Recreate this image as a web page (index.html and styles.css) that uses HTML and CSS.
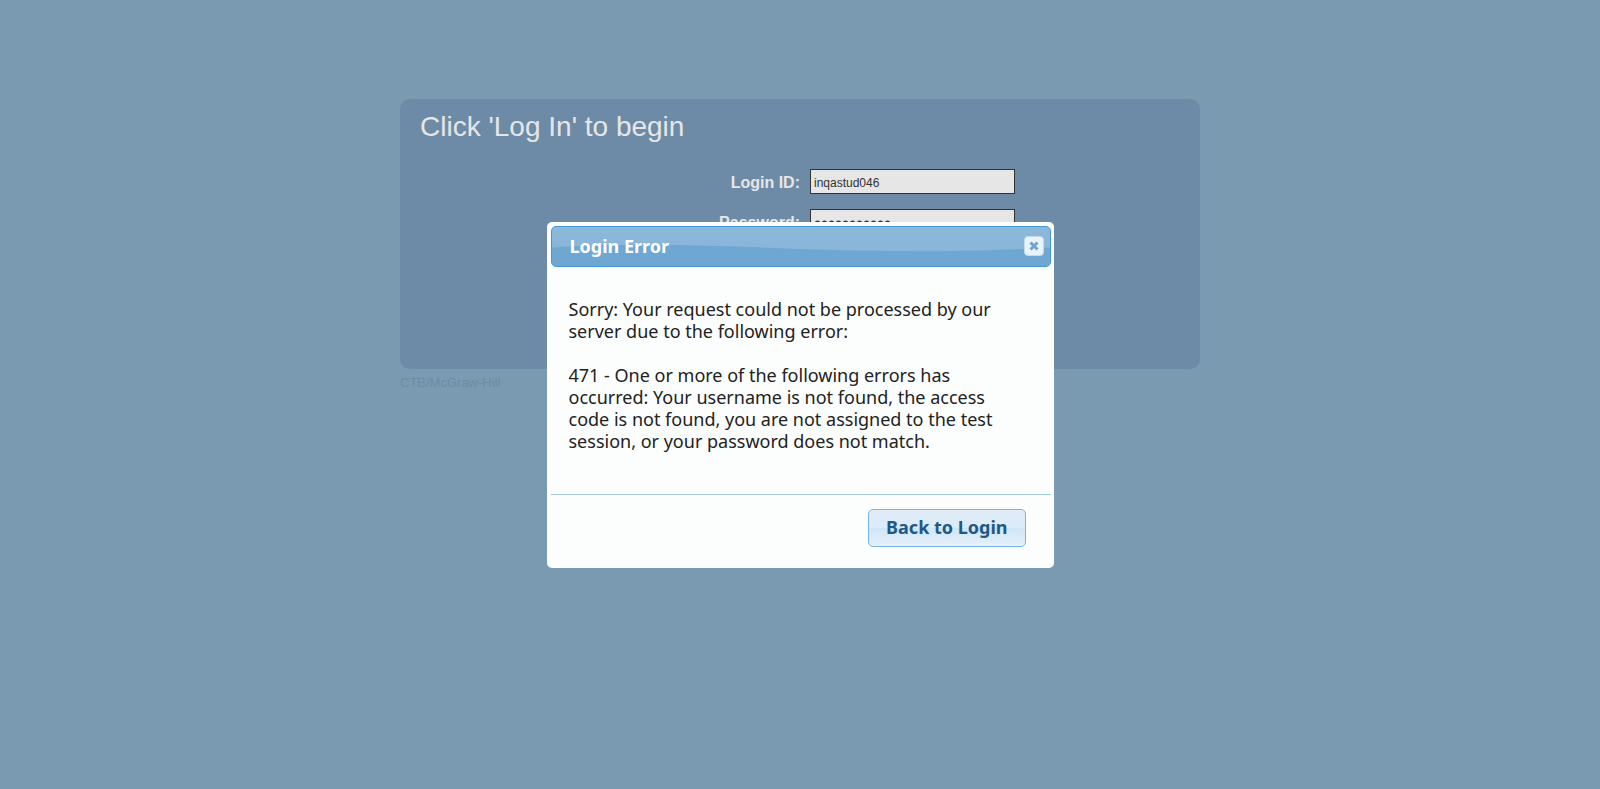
FILE: index.html
```html
<!DOCTYPE html>
<html lang="en">
<head>
<meta charset="utf-8">
<title>Log In</title>
<link rel="stylesheet" href="styles.css">
</head>
<body>
<main class="page">
  <section class="login-panel">
    <h1 class="login-title">Click 'Log In' to begin</h1>
    <form class="login-form">
      <label for="login-id">Login ID:</label>
      <input id="login-id" type="text" value="inqastud046">
      <label for="password">Password:</label>
      <input id="password" type="password" value="password123">
    </form>
  </section>
  <footer class="copyright">CTB/McGraw-Hill</footer>
</main>
<div class="overlay">
  <div class="dialog" role="dialog" aria-modal="true" aria-labelledby="dialog-title">
    <header class="dialog-header">
      <svg class="dialog-wave" viewBox="0 0 500 40" preserveAspectRatio="none" aria-hidden="true">
        <path d="M0 21C85 16 150 19 235 22S400 27 500 21V40H0Z"/>
      </svg>
      <h2 class="dialog-title" id="dialog-title">Login Error</h2>
      <button class="close-button" type="button" aria-label="Close">
        <svg width="12" height="12" viewBox="0 0 12 12" aria-hidden="true"><path d="M2.500 2.500L9.500 9.500M9.500 2.500L2.500 9.500"/></svg>
      </button>
    </header>
    <div class="dialog-body">
      <p>Sorry: Your request could not be processed by our<br>server due to the following error:</p>
      <p>471 - One or more of the following errors has<br>occurred: Your username is not found, the access<br>code is not found, you are not assigned to the test<br>session, or your password does not match.</p>
    </div>
    <footer class="dialog-footer">
      <button class="back-button" type="button">Back to Login</button>
    </footer>
  </div>
</div>
</body>
</html>
```
FILE: styles.css
```css
* { box-sizing: border-box; }

body {
  margin: 0;
  min-height: 100vh;
  background: #799ab1;
  font-family: "Liberation Sans", Arial, sans-serif;
}

.page {
  max-width: 800px;
  margin: 0 auto;
  padding-top: 99px;
}

.login-panel {
  min-height: 270px;
  padding: 12px 20px;
  border-radius: 10px;
  background: #6d8ba7;
  color: #e6e6e6;
}

.login-title {
  margin: 0 0 26px;
  font-size: 28px;
  line-height: 32px;
  font-weight: 400;
}

.login-form {
  display: grid;
  grid-template-columns: 1fr 1fr;
  gap: 15px 10px;
  align-items: center;
}

.login-form label {
  padding-top: 2px;
  margin-right: -5px;
  font-size: 16px;
  line-height: 23px;
  font-weight: 700;
  text-align: right;
}

.login-form input {
  width: 205px;
  height: 25px;
  margin: 0 5px;
  padding: 2px 3px 0;
  border: 1px solid #333;
  background: #e6e6e6;
  color: #333;
  font: 12px "Liberation Sans", Arial, sans-serif;
}

.login-form input[type="password"] {
  padding-top: 4px;
  font-size: 20px;
  line-height: 20px;
}

.copyright {
  padding-top: 5px;
  color: #6d8ba7;
  font-size: 13px;
  line-height: 18px;
}

.overlay {
  position: fixed;
  inset: 0;
  display: flex;
  align-items: center;
  justify-content: center;
}

.dialog {
  width: 507px;
  padding: 4px 3px 4px 4px;
  border-radius: 5px;
  background: #fcfdfd;
  color: #222;
  font-family: "Lucida Grande", "Lucida Sans", "Noto Sans", sans-serif;
  font-size: 18px;
}

.dialog-header {
  position: relative;
  display: flex;
  align-items: center;
  justify-content: space-between;
  height: 41px;
  padding: 0 6px 0 18px;
  border: 1px solid #4297d7;
  border-radius: 5px;
  overflow: hidden;
  background: linear-gradient(#8cb8da, #87b3d8);
}

.dialog-wave {
  position: absolute;
  inset: 0;
  width: 100%;
  height: 100%;
  fill: #6fa7d3;
}

.dialog-title {
  position: relative;
  margin: 0;
  color: #fff;
  font-size: 18px;
  line-height: 22px;
  font-weight: 700;
}

.close-button {
  position: relative;
  display: grid;
  place-items: center;
  width: 20px;
  height: 20px;
  padding: 0;
  border: 1px solid #c5dbec;
  border-radius: 4px;
  background: #e9f3fb;
}

.close-button path {
  fill: none;
  stroke: #6ca5d3;
  stroke-width: 3;
}

.dialog-body {
  padding: 31px 18px 32px;
  line-height: 22px;
}

.dialog-body p {
  margin: 0 0 22px;
  white-space: nowrap;
}

.dialog-body p:last-child { margin-bottom: 10px; }

.dialog-footer {
  display: flex;
  justify-content: flex-end;
  padding: 14px 25px 17px;
  border-top: 1px solid #a6c9e2;
}

.back-button {
  height: 38px;
  padding: 0 17px 2px;
  border: 1px solid #77b5e8;
  border-radius: 5px;
  background: linear-gradient(#e0edf8 0%, #dcebf8 50%, #cfe5f6 50%, #e6f1fa 100%);
  color: #1d5987;
  font: 700 18px/22px "Lucida Grande", "Lucida Sans", "Noto Sans", sans-serif;
}
```
